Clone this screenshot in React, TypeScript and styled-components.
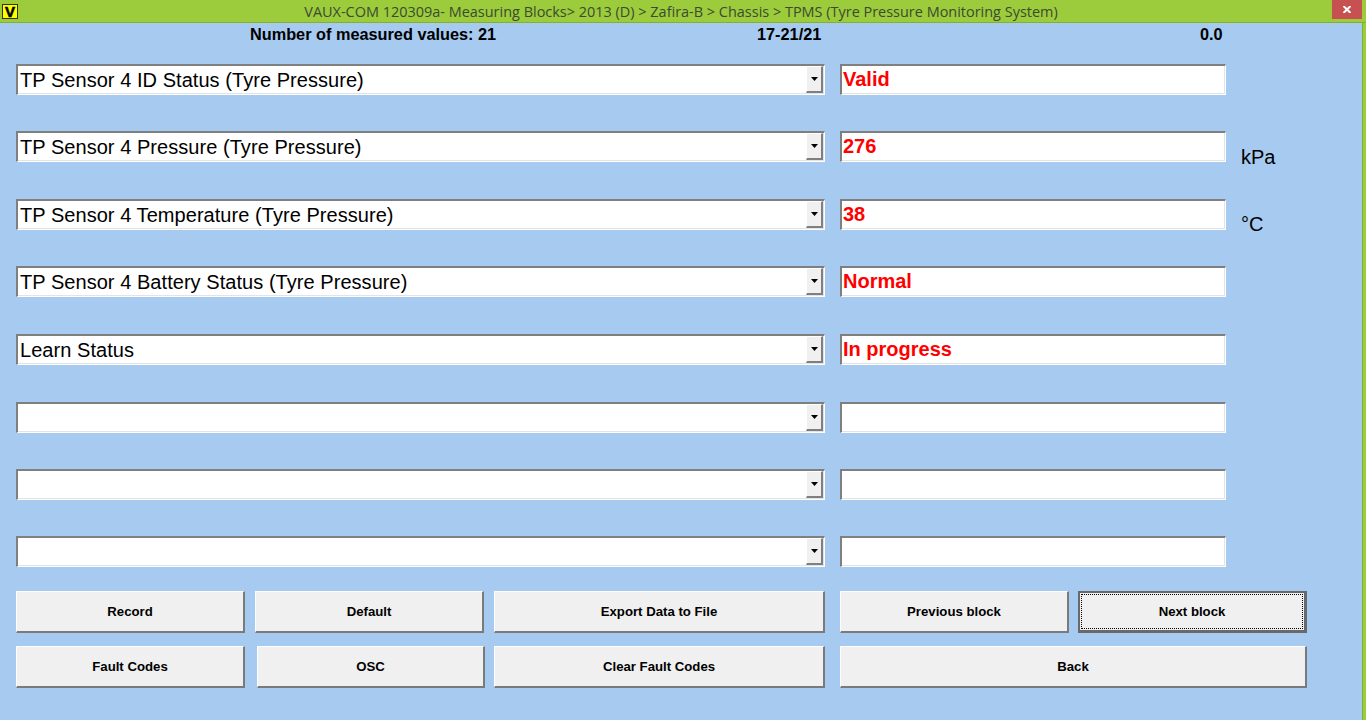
import React from "react";
import styled, { createGlobalStyle, css } from "styled-components";

const Global = createGlobalStyle`
  html, body { margin: 0; padding: 0; background: #a6caf0; }
  body { font-family: "Liberation Sans", Arial, sans-serif; overflow: hidden; }
`;

const Window = styled.div`
  width: 1366px;
  height: 720px;
  box-sizing: border-box;
  background: #9ccc3c;
  display: flex;
  flex-direction: column;
  overflow: hidden;
`;

const TitleBar = styled.div`
  height: 23px;
  box-sizing: border-box;
  flex: none;
  background: #9ccc3c;
  border-bottom: 1px solid #84b02f;
  display: flex;
  align-items: flex-start;
  position: relative;
`;

const Logo = styled.span`
  position: absolute;
  left: 2px;
  top: 4px;
  width: 16px;
  height: 15px;
  box-sizing: border-box;
  background: #ffff00;
  border: 1px solid #333300;
  color: #000;
  font: bold 15px/13px "Liberation Sans", sans-serif;
  -webkit-text-stroke: 0.6px #000;
  text-align: center;
`;

const Title = styled.div`
  flex: 1;
  text-align: center;
  font: 14.46px/18px "Open Sans", sans-serif;
  color: #3b4a30;
  margin-top: 3px;
  transform: translateX(-2px);
  white-space: nowrap;
`;

const Close = styled.button`
  position: absolute;
  right: 4px;
  top: 0;
  width: 30px;
  height: 19px;
  padding: 0;
  border: 0;
  background: #c75050;
  display: flex;
  align-items: center;
  justify-content: center;
`;

const Content = styled.div`
  flex: 1;
  width: 1363px;
  box-sizing: border-box;
  background: #a6caf0;
  border-right: 1px solid #84b02f;
`;

const Info = styled.div`
  display: grid;
  grid-template-columns: 250px 507px 443px 23px;
  height: 22px;
  font-size: 16.3px;
  line-height: 22px;
  font-weight: 700;
  color: #000;
  white-space: nowrap;
`;

const Spacer = styled.span``;

const Rows = styled.div`
  display: flex;
  flex-direction: column;
  padding: 19px 0 0 16px;
`;

const Row = styled.div<{ $top: number }>`
  display: flex;
  height: 31px;
  margin-top: ${(p) => p.$top}px;
`;

const sunken = css`
  height: 31px;
  box-sizing: border-box;
  background: #fff;
  border-style: solid;
  border-width: 2px 1px 1px 2px;
  border-color: #7f7f7f #fff #fff #7f7f7f;
  box-shadow: inset -1px -1px 0 #e3e3e3;
`;

const SelectBox = styled.div`
  ${sunken}
  width: 809px;
  padding: 0 1px 1px 0;
  display: flex;
  align-items: stretch;
  justify-content: space-between;
`;

const SelectText = styled.span`
  font-size: 20px;
  letter-spacing: 0.05px;
  line-height: 29px;
  padding-left: 2px;
  color: #000;
  white-space: nowrap;
`;

const Arrow = styled.span`
  width: 17px;
  box-sizing: border-box;
  background: #f0f0f0;
  border-style: solid;
  border-width: 1px 2px 2px 1px;
  border-color: #fff #7f7f7f #7f7f7f #fff;
  display: flex;
  align-items: center;
  justify-content: center;
`;

const ValueBox = styled.div`
  ${sunken}
  width: 386px;
  margin-left: 15px;
  padding-left: 1px;
  color: #ff0000;
  font-size: 20px;
  font-weight: 700;
  line-height: 27px;
  white-space: nowrap;
`;

const Unit = styled.span<{ $drop: number }>`
  margin-left: 15px;
  padding-top: ${(p) => p.$drop}px;
  font-size: 20px;
  line-height: 23px;
  color: #000;
  white-space: nowrap;
`;

const ButtonRow = styled.div<{ $top: number }>`
  display: flex;
  height: 42px;
  padding-left: 16px;
  margin-top: ${(p) => p.$top}px;
`;

const Btn = styled.button<{ $w: number; $gap?: number; $focus?: boolean }>`
  width: ${(p) => p.$w}px;
  margin-left: ${(p) => p.$gap ?? 0}px;
  height: 42px;
  flex: none;
  box-sizing: border-box;
  padding: 0;
  background: #f0f0f0;
  font: bold 13.2px "Liberation Sans", sans-serif;
  color: #000;
  border-style: solid;
  border-width: ${(p) => (p.$focus ? "2px 3px 3px 2px" : "1px 2px 2px 1px")};
  border-color: ${(p) => (p.$focus ? "#696969" : "#ffffff #7a7a7a #7a7a7a #ffffff")};
  position: relative;
  ${(p) =>
    p.$focus
      ? `&::after {
          content: "";
          position: absolute;
          inset: 1px;
          border: 1px dotted #000;
        }`
      : ""}
`;

const tops = [0, 36, 37, 36, 37, 37, 36, 36];
const rows: { label: string; value: string; unit?: string; drop?: number }[] = [
  { label: "TP Sensor 4 ID Status (Tyre Pressure)", value: "Valid" },
  { label: "TP Sensor 4 Pressure (Tyre Pressure)", value: "276", unit: "kPa", drop: 15 },
  { label: "TP Sensor 4 Temperature (Tyre Pressure)", value: "38", unit: "°C", drop: 14 },
  { label: "TP Sensor 4 Battery Status (Tyre Pressure)", value: "Normal" },
  { label: "Learn Status", value: "In progress" },
  { label: "", value: "" },
  { label: "", value: "" },
  { label: "", value: "" },
];

export default function App() {
  return (
    <Window>
      <Global />
      <TitleBar>
        <Logo>V</Logo>
        <Title>
          VAUX-COM 120309a- Measuring Blocks&gt; 2013 (D) &gt; Zafira-B &gt; Chassis &gt; TPMS (Tyre Pressure Monitoring System)
        </Title>
        <Close aria-label="Close">
          <svg width="8" height="7" viewBox="0 0 8 7">
            <path d="M0.5 0 L7.5 7 M7.5 0 L0.5 7" stroke="#fff" strokeWidth="2" fill="none" />
          </svg>
        </Close>
      </TitleBar>
      <Content>
        <Info>
          <Spacer />
          <span>Number of measured values: 21</span>
          <span>17-21/21</span>
          <span>0.0</span>
        </Info>
        <Rows>
          {rows.map((r, i) => (
            <Row key={i} $top={tops[i]}>
              <SelectBox>
                <SelectText>{r.label}</SelectText>
                <Arrow>
                  <svg width="7" height="4" viewBox="0 0 7 4">
                    <path d="M0 0 H7 L3.5 4 Z" fill="#000" />
                  </svg>
                </Arrow>
              </SelectBox>
              <ValueBox>{r.value}</ValueBox>
              {r.unit && <Unit $drop={r.drop ?? 0}>{r.unit}</Unit>}
            </Row>
          ))}
        </Rows>
        <ButtonRow $top={24}>
          <Btn $w={229}>Record</Btn>
          <Btn $w={229} $gap={10}>Default</Btn>
          <Btn $w={331} $gap={10}>Export Data to File</Btn>
          <Btn $w={229} $gap={15}>Previous block</Btn>
          <Btn $w={229} $gap={9} $focus>Next block</Btn>
        </ButtonRow>
        <ButtonRow $top={13}>
          <Btn $w={229}>Fault Codes</Btn>
          <Btn $w={228} $gap={12}>OSC</Btn>
          <Btn $w={331} $gap={9}>Clear Fault Codes</Btn>
          <Btn $w={467} $gap={15}>Back</Btn>
        </ButtonRow>
      </Content>
    </Window>
  );
}
